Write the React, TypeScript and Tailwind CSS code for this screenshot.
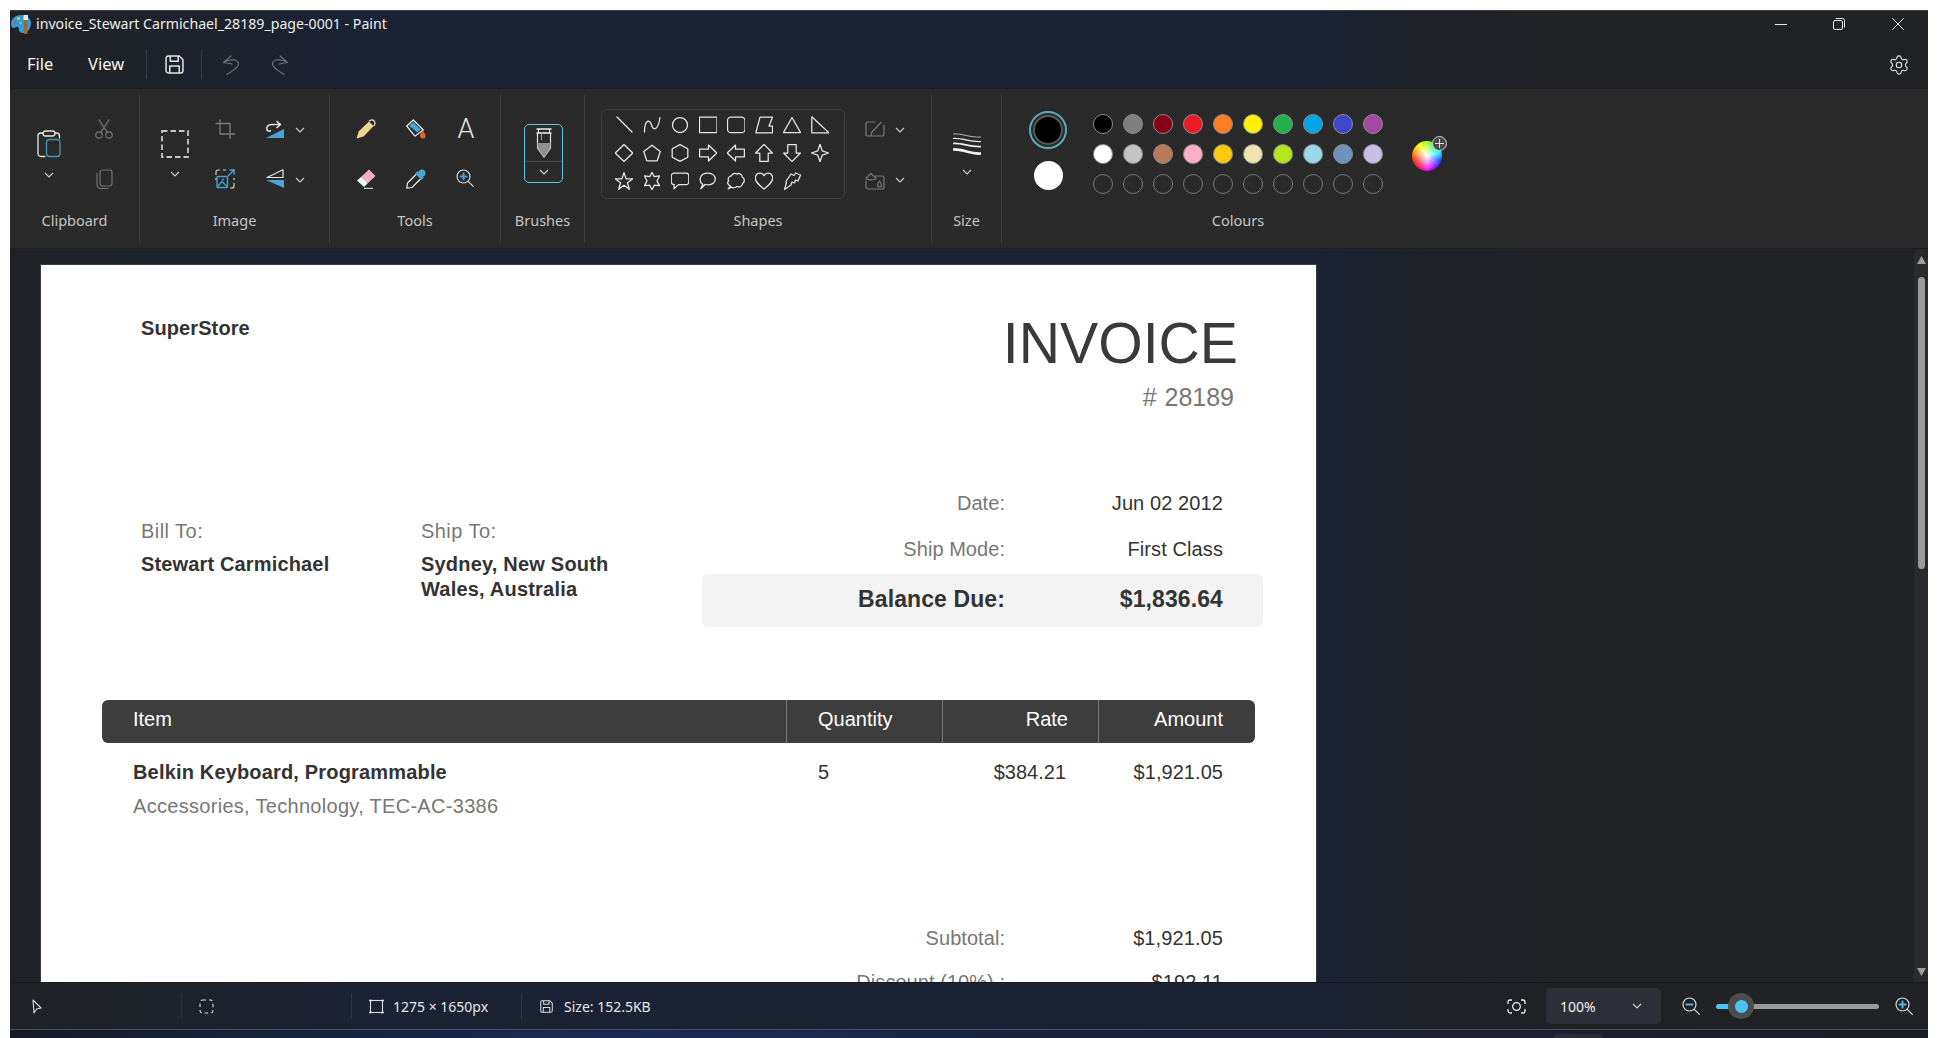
import React from "react";
import { Settings } from "lucide-react";

type SP = { w: number; h: number; children: React.ReactNode; s?: string; sw?: number };
const Ic = ({ w, h, children, s = "#e6e6e6", sw = 1.3 }: SP) => (
  <svg width={w} height={h} viewBox={`0 0 ${w} ${h}`} fill="none" stroke={s} strokeWidth={sw} strokeLinejoin="round" strokeLinecap="round" className="block shrink-0">
    {children}
  </svg>
);

const Chevron = ({ c = "#d0d0d0", w = 10 }: { c?: string; w?: number }) => (
  <svg width={w} height="6" viewBox="0 0 10 6" fill="none" stroke={c} strokeWidth="1.1" className="block shrink-0">
    <path d="M1 1 L5 5 L9 1" />
  </svg>
);

const Floppy = ({ size, c = "#e6e6e6" }: { size: number; c?: string }) => (
  <svg width={size} height={size} viewBox="0 0 18 18" fill="none" stroke={c} strokeWidth="1.4" strokeLinejoin="round" className="block shrink-0">
    <path d="M3 1 H13.5 L17 4.5 V15 a2 2 0 0 1 -2 2 H3 a2 2 0 0 1 -2 -2 V3 a2 2 0 0 1 2 -2 Z" />
    <path d="M5 1 V6 H12.5 V1" />
    <path d="M4.5 17 V10.5 H13.5 V17" />
  </svg>
);

const Magnifier = ({ plus, minus, blue = "#53b7e8" }: { plus?: boolean; minus?: boolean; blue?: string }) => (
  <Ic w={18} h={18} sw={1.2} s="#dcdcdc">
    <circle cx="7.5" cy="7.5" r="6.5" />
    <path d="M12.3 12.3 L17.3 17.3" />
    {(plus || minus) && <path d="M4.5 7.5 H10.5" stroke={blue} strokeWidth="2" />}
    {plus && <path d="M7.5 4.5 V10.5" stroke={blue} strokeWidth="2" />}
  </Ic>
);

const shapes: React.ReactNode[] = [
  <path d="M2 1 L17 16" />,
  <path d="M1.5 16 C1.5 3 7 3 8.5 9 C10 15 15 15 17 1.5" />,
  <circle cx="9" cy="9" r="7.5" />,
  <rect x="0.5" y="1.2" width="17.5" height="15.5" />,
  <rect x="0.5" y="1.2" width="17.5" height="15.5" rx="3.5" />,
  <path d="M5 1.2 H17.5 L14 10 H17.5 V16.8 H0.8 Z" />,
  <path d="M9 1.5 L17.5 16.5 H0.5 Z" />,
  <path d="M0.8 0.8 L18 16.8 H0.8 Z" />,
  <path d="M9 0.5 L17.8 9 L9 17.5 L0.2 9 Z" />,
  <path d="M9 1.2 L17.3 7.5 L14.2 16.8 H3.8 L0.7 7.5 Z" />,
  <path d="M9 0.6 L16.8 4.8 V13.2 L9 17.4 L1.2 13.2 V4.8 Z" />,
  <path d="M0.6 5.2 H9.5 V1 L17.8 9 L9.5 17 V12.8 H0.6 Z" />,
  <path d="M17.4 5.2 H8.5 V1 L0.2 9 L8.5 17 V12.8 H17.4 Z" />,
  <path d="M9 0.4 L17.4 9 H13.2 V17.4 H4.8 V9 H0.6 Z" />,
  <path d="M9 17.6 L17.4 9 H13.2 V0.6 H4.8 V9 H0.6 Z" />,
  <path d="M9 0.3 L11.2 6.8 L17.7 9 L11.2 11.2 L9 17.7 L6.8 11.2 L0.3 9 L6.8 6.8 Z" />,
  <path d="M9 0.6 L11.1 6.9 H17.8 L12.4 10.8 L14.4 17.3 L9 13.3 L3.6 17.3 L5.6 10.8 L0.2 6.9 H6.9 Z" />,
  <path d="M9 0.3 L11.2 4.6 L16.4 3.9 L14 8.9 L16.4 13.6 L11.3 13.2 L9 17.7 L6.7 13.2 L1.6 13.6 L4 8.9 L1.6 3.9 L6.8 4.6 Z" />,
  <path d="M3.2 1.2 H15.2 a2.6 2.6 0 0 1 2.6 2.6 V10 a2.6 2.6 0 0 1 -2.6 2.6 H7.5 L3 16.8 L3.3 12.6 a2.6 2.6 0 0 1 -3 -2.6 V3.8 a2.6 2.6 0 0 1 2.9 -2.6 Z" />,
  <path d="M3.8 12.5 C-0.5 9.5 0 1 9 1 C18.5 1 19 12.9 9 12.9 C8 12.9 7 12.8 6 12.5 L1.8 16.8 Z" />,
  <path d="M3.5 14 C0.3 13 0.2 10 1.6 9 C0.2 6.5 2.3 3.8 4.5 3.8 C5 1.8 8 0.5 10 2 C12.5 0.5 15.2 2.8 15.2 5 C17.9 6 17.9 10.2 15.7 11.2 C15.7 14.2 12 15.8 10 14.4 C8.5 16.1 5.5 16.1 4.5 15 L1.2 16.9 Z" />,
  <path d="M9 17 C4 13 0.3 10 0.3 5.9 C0.3 2.8 2.8 1 5 1 C7 1 8.2 2.2 9 3.6 C9.8 2.2 11 1 13 1 C15.2 1 17.7 2.8 17.7 5.9 C17.7 10 14 13 9 17 Z" />,
  <path d="M8 2 L11 3.5 L12.5 1 L17.5 3 L15 9 L12.5 8 L11.5 11 L9 10 L8 13 L1.5 17.5 L3.5 10.5 L2.8 9.5 Z" />,
];

const topColors = ["#000000", "#7f7f7f", "#880015", "#ed1c24", "#ff7f27", "#fff200", "#22b14c", "#00a2e8", "#3f48cc", "#a349a4"];
const midColors = ["#ffffff", "#c3c3c3", "#b97a57", "#ffaec9", "#ffc90e", "#efe4b0", "#b5e61d", "#99d9ea", "#7092be", "#c8bfe7"];
const emptyColors = Array.from({ length: 10 }, (_, i) => i);

const Group = ({ className, label, children }: { className: string; label: string; children: React.ReactNode }) => (
  <div className={`mt-[5px] h-[149px] flex flex-col shrink-0 ${className}`}>
    <div className="h-[116px] flex">{children}</div>
    <div className="h-[20px] leading-[20px] text-center text-[14.5px] text-[#c4c4c4]">{label}</div>
  </div>
);

const Row = ({ label, value, className = "" }: { label: string; value: string; className?: string }) => (
  <div className={`grid grid-cols-[303px_218px] ${className}`}>
    <div className="text-right text-[#777777] tracking-[0.05px]">{label}</div>
    <div className="text-right text-[#333333] tracking-[0.1px]">{value}</div>
  </div>
);

export default function App() {
  return (
    <div className="w-[1938px] h-[1038px] bg-white pt-[10px] px-[10px] flex flex-col overflow-hidden font-['Noto_Sans',sans-serif]">
      <div className="flex-1 min-h-0 flex flex-col border-t border-[#3e3e3e] bg-[linear-gradient(90deg,#202226_0px,#1f2228_80px,#1b2233_350px,#1a2233_1306px,#1e2129_1400px,#202225_1550px)]">
        {/* Title bar */}
        <div className="h-[33px] pb-[7px] flex items-center text-[#eeeeee] shrink-0">
          <div className="ml-[1px] w-[25px] shrink-0">
            <svg width="20" height="20" viewBox="0 0 20 20" className="block">
              <path d="M10 1 C4 1 0 5 0 10 C0 14 3 15 5 13 C7 12 8 14 8 16 C8 18 10 19 12 19 C17 19 20 14 20 9 C20 4 15 1 10 1 Z" fill="#2f9ce0" />
              <circle cx="4" cy="8" r="1.4" fill="#ef4444" />
              <circle cx="7.5" cy="4.5" r="1.4" fill="#facc15" />
              <circle cx="9.5" cy="9" r="1.4" fill="#4ade80" />
              <rect x="13" y="6" width="3.5" height="14" fill="#a5682a" />
              <rect x="12.5" y="1" width="4.5" height="5" fill="#e8e8e8" />
            </svg>
          </div>
          <span className="text-[14.15px] whitespace-nowrap">invoice_Stewart Carmichael_28189_page-0001 - Paint</span>
          <div className="ml-auto flex items-center pr-[24px]">
            <div className="w-[12px] h-px bg-[#e8e8e8]" />
            <div className="ml-[46px]">
              <Ic w={12} h={12} sw={1}>
                <rect x="0.5" y="2.5" width="9" height="9" rx="1.5" />
                <path d="M3 0.5 H9.5 a2 2 0 0 1 2 2 V9" />
              </Ic>
            </div>
            <div className="ml-[47px]">
              <Ic w={12} h={12} sw={1}>
                <path d="M0.5 0.5 L11.5 11.5 M11.5 0.5 L0.5 11.5" />
              </Ic>
            </div>
          </div>
        </div>
        {/* Menu */}
        <div className="h-[44px] pb-[3px] flex items-center text-[#f2f2f2] text-[16.5px] shrink-0">
          <span className="ml-[17px] w-[61px]">File</span>
          <span className="w-[58px]">View</span>
          <div className="w-px h-[29px] bg-[#3a3d43]" />
          <div className="ml-[18px]"><Floppy size={19} /></div>
          <div className="ml-[17px] w-px h-[29px] bg-[#3a3d43]" />
          <div className="ml-[20px]">
            <Ic w={18} h={20} s="#6f7074" sw={1.2}>
              <path d="M9 1 L1.5 7.5 L10 9 M1.5 7.5 C6 5 13 3 16 7 C18.5 11 12 15 5 19.5" />
            </Ic>
          </div>
          <div className="ml-[31px]">
            <Ic w={18} h={20} s="#6f7074" sw={1.2}>
              <path d="M9 1 L16.5 7.5 L8 9 M16.5 7.5 C12 5 5 3 2 7 C-0.5 11 6 15 13 19.5" />
            </Ic>
          </div>
          <div className="ml-auto mr-[18px]">
            <Settings size={22} strokeWidth={1.2} color="#e8e8e8" />
          </div>
        </div>
        {/* Ribbon */}
        <div className="h-[160px] bg-[#2a2a2a] border-t border-[#1e1e1e] flex shrink-0">
          <Group className="w-[130px] border-r border-[#3c3c3c]" label="Clipboard">
            <div className="ml-[27px] w-[24px] pt-[36px] flex flex-col items-center">
              <Ic w={24} h={28} sw={1.3}>
                <path d="M8 26.5 H4 a3 3 0 0 1 -3 -3 V6 a3 3 0 0 1 3 -3 H6 M18 3 H19.5 a3 3 0 0 1 3 3 V8" />
                <rect x="6" y="1" width="12" height="5" rx="2.5" />
                <rect x="9.5" y="9.5" width="13.5" height="17" rx="3" stroke="#4a93b5" />
              </Ic>
              <div className="mt-[14px]"><Chevron /></div>
            </div>
            <div className="ml-[33px] pt-[25px] flex flex-col gap-[30px]">
              <Ic w={20} h={20} s="#737373" sw={1.2}>
                <circle cx="5" cy="16" r="3.2" />
                <circle cx="15" cy="16" r="3.2" />
                <path d="M6.8 13.3 L15 0.8 M13.2 13.3 L5 0.8" />
              </Ic>
              <Ic w={20} h={20} s="#737373" sw={1.2}>
                <rect x="6" y="1" width="12" height="16" rx="2.5" />
                <path d="M3 4.5 V15.5 a4 4 0 0 0 4 4 H14" />
              </Ic>
            </div>
          </Group>
          <Group className="w-[190px] border-r border-[#3c3c3c]" label="Image">
            <div className="ml-[21px] w-[28px] pt-[36px] flex flex-col items-center">
              <svg width="28" height="28" viewBox="0 0 28 28" className="block">
                <rect x="1" y="1" width="26" height="26" fill="none" stroke="#c8c8c8" strokeWidth="1.8" strokeDasharray="5.5 3" />
              </svg>
              <div className="mt-[13px]"><Chevron /></div>
            </div>
            <div className="ml-[26px] pt-[25px] flex flex-col gap-[30px]">
              <Ic w={20} h={20} s="#7c7c7c" sw={1.3}>
                <path d="M5 1 V15 H20 M1 4.5 H15 V19" />
              </Ic>
              <svg width="20" height="20" viewBox="0 0 20 20" fill="none" className="block">
                <path d="M1 6 V3 a2 2 0 0 1 2 -2 H5 M8 1 H11 M1 9 V11 M19 9 V11 M19 14 V17 a2 2 0 0 1 -2 2 H15" stroke="#d0d0d0" strokeWidth="1.2" />
                <path d="M13 7 L19 1 M14.5 1 H19 V5.5" stroke="#4aa3d3" strokeWidth="1.4" />
                <rect x="2" y="7.5" width="10.5" height="11" rx="1" stroke="#4aa3d3" strokeWidth="1.4" />
                <path d="M2.5 17.5 L7 12.5 L12 17.5" stroke="#4aa3d3" strokeWidth="1.4" />
                <circle cx="8" cy="10.5" r="1" fill="#4aa3d3" />
              </svg>
            </div>
            <div className="ml-[31px] pt-[26px] flex flex-col gap-[31px]">
              <svg width="18" height="18" viewBox="0 0 18 18" fill="none" className="block">
                <path d="M0 18 H18 V9 Z" fill="#4aa3d3" />
                <path d="M1.5 11 C-0.5 7 2 4.5 6 4.5 H14 M10.5 1 L14.5 4.5 L10.5 8 M1.5 11 H5" stroke="#eeeeee" strokeWidth="1.4" strokeLinejoin="round" />
              </svg>
              <svg width="18" height="19" viewBox="0 0 18 19" fill="none" className="block">
                <path d="M1 8.5 H17 V0.8 Z" stroke="#e6e6e6" strokeWidth="1.2" strokeLinejoin="round" />
                <path d="M0 11 H18 V19 Z" fill="#4aa3d3" />
              </svg>
            </div>
            <div className="ml-[11px] pt-[33px] flex flex-col gap-[44px]">
              <Chevron />
              <Chevron />
            </div>
          </Group>
          <Group className="w-[171px] border-r border-[#3c3c3c]" label="Tools">
            <div className="ml-[26px] pt-[25px] grid grid-cols-[20px_20px_20px] gap-x-[30px] gap-y-[30px] h-max">
              <svg width="20" height="20" viewBox="0 0 20 20" fill="none" className="block">
                <path d="M0.6 19.4 L2.6 12.4 L13 2.4 L17.6 7 L7.6 17.4 Z" fill="#f1d48c" />
                <path d="M13 2.4 C14.5 0.8 16.5 0.4 18 1.8 C19.6 3.4 19 5.6 17.6 7" stroke="#eeeeee" strokeWidth="1.2" />
              </svg>
              <svg width="21" height="20" viewBox="0 0 21 20" fill="none" className="block">
                <path d="M0.7 7 L7.3 1 L17.3 11 L9.8 16.6 a1 1 0 0 1 -1.4 0 Z" stroke="#eeeeee" strokeWidth="1.2" strokeLinejoin="round" />
                <path d="M3 6.8 L7.3 3 L14.8 10.8 L11 13.6 Z" fill="#4aa3d3" />
                <path d="M16.7 11.5 C15 14 14 15 14 16.8 a2.8 2.8 0 0 0 5.6 0 C19.6 15 18.4 14 16.7 11.5 Z" fill="#e2602f" />
              </svg>
              <div className="h-[20px] w-[20px] flex items-center justify-center text-[27px] leading-[20px] text-[#e4e4e4] font-light font-['Roboto',sans-serif]">A</div>
              <svg width="20" height="20" viewBox="0 0 20 20" fill="none" className="block">
                <path d="M13 0.5 L19.5 7 L12 14 L5.5 7.5 Z" fill="#f4b0b4" />
                <path d="M5.5 7.5 L12 14 L8 18 L1 11.5 Z" fill="#f0f0f0" />
                <path d="M8 19.3 H17" stroke="#dddddd" strokeWidth="1.1" />
              </svg>
              <svg width="20" height="20" viewBox="0 0 20 20" fill="none" className="block">
                <path d="M10 5.5 L1.5 14 L0.8 19 L6 18.5 L14.5 10" stroke="#eeeeee" strokeWidth="1.2" />
                <circle cx="16" cy="4" r="3.5" fill="#4aa3d3" />
                <path d="M9 4.5 L15.5 11 L18 8.5 L11.5 2 Z" fill="#4aa3d3" />
              </svg>
              <Magnifier plus blue="#4aa3d3" />
            </div>
          </Group>
          <Group className="w-[84px] border-r border-[#3c3c3c]" label="Brushes">
            <div className="ml-[23px] mt-[30px] w-[39px] h-[59px] rounded-[5px] border border-[#62c3dd] flex flex-col items-center">
              <div className="h-[37px] w-full flex justify-center border-b border-[#4a4a4a] pt-[3px]">
                <svg width="16" height="30" viewBox="0 0 16 30" fill="none" className="block">
                  <path d="M0.5 1 H15.5 M0.5 5 H15.5" stroke="#eeeeee" strokeWidth="1.4" />
                  <path d="M2.5 1 V5 M13.5 1 V5" stroke="#eeeeee" strokeWidth="1" />
                  <path d="M1.5 5 V20 L8 29 L14.5 20 V5" stroke="#e0e0e0" strokeWidth="1.2" />
                  <path d="M1.5 15 H14.5 V20 L8 29 L1.5 20 Z" fill="#8f8f8f" />
                  <path d="M5.5 6 V12" stroke="#9a9a9a" strokeWidth="1.1" />
                </svg>
              </div>
              <div className="flex-1 flex items-center justify-center"><Chevron /></div>
            </div>
          </Group>
          <Group className="w-[347px] border-r border-[#3c3c3c]" label="Shapes">
            <div className="ml-[16px] mt-[15px] w-[244px] h-[90px] rounded-[6px] border border-[#3f3f3f] pl-[8px] pt-[1px] grid grid-cols-[repeat(8,28px)] auto-rows-[28px]">
              {shapes.map((s, i) => (
                <div key={i} className="flex items-center justify-center">
                  <Ic w={18} h={18} s="#e8e8e8" sw={1.25}>{s}</Ic>
                </div>
              ))}
            </div>
            <div className="ml-[20px] pt-[26px] flex flex-col gap-[30px]">
              <Ic w={20} h={20} s="#777777" sw={1.2}>
                <path d="M10 2 H3 a2 2 0 0 0 -2 2 V14 a2 2 0 0 0 2 2 H6 L7 12 L16 2.5 M19 5 V14 a2 2 0 0 1 -2 2 H7" />
              </Ic>
              <Ic w={20} h={20} s="#777777" sw={1.2}>
                <path d="M10 6 H17 a2 2 0 0 1 2 2 V17 a2 2 0 0 1 -2 2 H3 a2 2 0 0 1 -2 -2 V11" />
                <path d="M1 8 L6 3.5 L11 8 C11 10.5 1 10.5 1 8 Z" />
                <path d="M14.5 11 C13 13 12.5 14 12.5 15 a2 2 0 0 0 4 0 C16.5 14 16 13 14.5 11 Z" />
              </Ic>
            </div>
            <div className="ml-[10px] pt-[33px] flex flex-col gap-[44px]">
              <Chevron />
              <Chevron />
            </div>
          </Group>
          <Group className="w-[70px] border-r border-[#3c3c3c]" label="Size">
            <div className="w-full pt-[39px] flex flex-col items-center">
              <svg width="28" height="23" viewBox="0 0 28 23" fill="none" stroke="#f2f2f2" className="block">
                <path d="M0 1 C8 0 18 5 28 4" strokeWidth="0.7" />
                <path d="M0 5.5 C8 4.5 18 9.5 28 8.5" strokeWidth="1.1" />
                <path d="M0 10.5 C8 9.5 18 14.5 28 13.5" strokeWidth="1.7" />
                <path d="M0 16.5 C8 15.5 18 21.5 28 20.5" strokeWidth="2.6" />
              </svg>
              <div className="mt-[13px]"><Chevron /></div>
            </div>
          </Group>
          <Group className="w-[472px]" label="Colours">
            <div className="ml-[27px] w-[38px] pt-[17px] flex flex-col items-center">
              <div className="w-[38px] h-[38px] rounded-full border-2 border-[#5fa8ba] p-[2px]">
                <div className="w-full h-full rounded-full bg-black border-2 border-[#585858]" />
              </div>
              <div className="mt-[12px] w-[29px] h-[29px] rounded-full bg-white" />
            </div>
            <div className="ml-[26px] pt-[20px] grid grid-cols-[repeat(10,20px)] gap-[10px] h-max">
              {topColors.map((c) => (
                <div key={c} className="w-[20px] h-[20px] rounded-full border border-[#8a8a8a]" style={{ backgroundColor: c }} />
              ))}
              {midColors.map((c) => (
                <div key={c} className="w-[20px] h-[20px] rounded-full border border-[#8a8a8a]" style={{ backgroundColor: c }} />
              ))}
              {emptyColors.map((i) => (
                <div key={i} className="w-[20px] h-[20px] rounded-full border border-[#757575]" />
              ))}
            </div>
            <div className="ml-[29px] mt-[47px] relative w-[30px] h-[30px] rounded-full bg-[image:radial-gradient(circle,#ffffff_0%,#ffffff00_72%),conic-gradient(#a8ff00,#00ff80,#00ffff,#0040ff,#8000ff,#ff00ff,#ff0040,#ff2000,#ff9000,#ffff00,#a8ff00)]">
              <div className="absolute left-[20px] top-[-5px] w-[15px] h-[15px] rounded-full bg-[#4a4a4a] border border-[#d0d0d0] flex items-center justify-center">
                <svg width="9" height="9" viewBox="0 0 9 9" stroke="#e0e0e0" strokeWidth="1" className="block">
                  <path d="M0 4.5 H9 M4.5 0 V9" />
                </svg>
              </div>
            </div>
          </Group>
        </div>
        {/* Canvas */}
        <div className="flex-1 min-h-0 flex border-t border-[#1c1d20]">
          <div className="flex-1 min-w-0 overflow-hidden pl-[31px] pt-[16px]">
            <div className="w-[1275px] h-[1650px] bg-white outline outline-1 outline-[#3a3d44] font-['Liberation_Sans',sans-serif] text-[20px] leading-[24px] text-[#333333]">
              <div className="flex justify-between pt-[51px] pl-[100px] pr-[78px]">
                <div className="font-bold tracking-[0.1px]">SuperStore</div>
                <div className="flex flex-col items-end -mt-[3px]">
                  <div className="text-[57.2px] leading-[60px] text-[#3a3a3a]">INVOICE</div>
                  <div className="mt-[10px] mr-[4px] text-[25px] leading-[28px] text-[#777777]">
                    <span className="mr-[1px]">#</span> 28189
                  </div>
                </div>
              </div>
              <div className="flex mt-[69px]">
                <div className="ml-[100px] w-[280px] pt-[39px]">
                  <div className="text-[#777777] tracking-[0.45px]">Bill To:</div>
                  <div className="mt-[9px] font-bold leading-[25px] tracking-[0.15px]">Stewart Carmichael</div>
                </div>
                <div className="w-[281px] pt-[39px]">
                  <div className="text-[#777777] tracking-[0.45px]">Ship To:</div>
                  <div className="mt-[9px] font-bold leading-[25px] tracking-[0.2px]">Sydney, New South<br />Wales, Australia</div>
                </div>
                <div className="w-[561px]">
                  <Row label="Date:" value="Jun 02 2012" className="pt-[11px] h-[46px]" />
                  <Row label="Ship Mode:" value="First Class" className="pt-[11px] h-[48px]" />
                  <div className="h-[53px] rounded-[6px] bg-[#f3f3f3] pt-[12px] grid grid-cols-[303px_218px] text-[23px] leading-[26px] font-bold tracking-[0.1px]">
                    <div className="text-right">Balance Due:</div>
                    <div className="text-right">$1,836.64</div>
                  </div>
                </div>
              </div>
              <div className="ml-[61px] w-[1153px] mt-[73px] h-[43px] rounded-[6px] bg-[#3d3d3d] text-white grid grid-cols-[684px_156px_156px_157px] leading-[38px]">
                <div className="pl-[31px]">Item</div>
                <div className="pl-[31px] border-l border-[#777777]">Quantity</div>
                <div className="pr-[30px] text-right border-l border-[#777777]">Rate</div>
                <div className="pr-[32px] text-right border-l border-[#777777]">Amount</div>
              </div>
              <div className="ml-[61px] w-[1153px] mt-[17px] grid grid-cols-[684px_156px_156px_157px]">
                <div className="pl-[31px]">
                  <div className="font-bold tracking-[0.17px]">Belkin Keyboard, Programmable</div>
                  <div className="mt-[10px] text-[#777777] tracking-[0.3px]">Accessories, Technology, TEC-AC-3386</div>
                </div>
                <div className="pl-[32px]">5</div>
                <div className="pr-[32px] text-right">$384.21</div>
                <div className="pr-[32px] text-right tracking-[0.05px]">$1,921.05</div>
              </div>
              <div className="ml-[661px] mt-[108px] flex flex-col gap-[20px]">
                <Row label="Subtotal:" value="$1,921.05" />
                <Row label="Discount (10%) :" value="$192.11" />
              </div>
            </div>
          </div>
          <div className="w-[14px] shrink-0 bg-[#2a2b2e] rounded-t-[6px] flex flex-col items-center pl-[1px]">
            <svg width="9" height="8" viewBox="0 0 9 8" fill="#a0a0a0" className="block mt-[7px]"><path d="M4.5 0 L9 8 H0 Z" /></svg>
            <div className="mt-[13px] w-[7px] h-[292px] rounded-full bg-[#9a9a9a]" />
            <svg width="9" height="8" viewBox="0 0 9 8" fill="#a0a0a0" className="block mt-auto mb-[6px]"><path d="M4.5 8 L9 0 H0 Z" /></svg>
          </div>
        </div>
        {/* Status bar */}
        <div className="h-[47px] shrink-0 flex items-center text-[14px] text-[#e8e8e8] border-t border-[#17181b]">
          <div className="w-[172px] h-[26px] border-r border-[#2f343d] pl-[22px] flex items-center">
            <svg width="10" height="15" viewBox="0 0 10 15" fill="none" stroke="#dddddd" strokeWidth="1.1" strokeLinejoin="round" className="block">
              <path d="M1 1 L9 9 L4.5 10 L2 14 Z" />
            </svg>
          </div>
          <div className="w-[170px] h-[26px] border-r border-[#2f343d] pl-[17px] flex items-center">
            <svg width="15" height="15" viewBox="0 0 15 15" fill="none" stroke="#dddddd" strokeWidth="1.1" className="block">
              <rect x="1" y="1" width="13" height="13" rx="2.5" strokeDasharray="3.5 3" />
            </svg>
          </div>
          <div className="w-[170px] h-[26px] border-r border-[#2f343d] pl-[17px] flex items-center">
            <svg width="15" height="15" viewBox="0 0 15 15" fill="none" stroke="#dddddd" strokeWidth="1.1" className="block">
              <rect x="1.5" y="1.5" width="12" height="12" />
              <path d="M0 1.5 H3 M12 1.5 H15 M0 13.5 H3 M12 13.5 H15" strokeWidth="1.6" />
            </svg>
            <span className="ml-[9px] whitespace-nowrap">1275 × 1650px</span>
          </div>
          <div className="pl-[18px] flex items-center">
            <Floppy size={13} c="#dddddd" />
            <span className="ml-[11px] whitespace-nowrap">Size: 152.5KB</span>
          </div>
          <div className="ml-auto flex items-center pr-[15px]">
            <svg width="19" height="15" viewBox="0 0 19 15" fill="none" stroke="#eeeeee" strokeWidth="1.3" className="block">
              <path d="M1 5 V3 a2 2 0 0 1 2 -2 H5 M14 1 H16 a2 2 0 0 1 2 2 V5 M18 10 V12 a2 2 0 0 1 -2 2 H14 M5 14 H3 a2 2 0 0 1 -2 -2 V10" />
              <circle cx="9.5" cy="7.5" r="3.8" />
            </svg>
            <div className="ml-[20px] w-[115px] h-[36px] rounded-[5px] bg-[#2d3038] flex items-center pl-[14px] text-[#f2f2f2]">
              <span>100%</span>
              <div className="ml-[36px]"><Chevron /></div>
            </div>
            <div className="ml-[21px]"><Magnifier minus /></div>
            <div className="ml-[16px] w-[163px] flex items-center">
              <div className="w-[14px] h-[5px] rounded-l-full bg-[#4cc2ff]" />
              <div className="-mx-[2px] w-[26px] h-[26px] rounded-full bg-[#4d4d4d] flex items-center justify-center relative">
                <div className="w-[13px] h-[13px] rounded-full bg-[#4cc2ff]" />
              </div>
              <div className="flex-1 h-[5px] rounded-r-full bg-[#9a9a9a]" />
            </div>
            <div className="ml-[16px]"><Magnifier plus /></div>
          </div>
        </div>
      </div>
      {/* Desktop strip */}
      <div className="h-[9px] shrink-0 border-t border-[#4a4f58] bg-[linear-gradient(90deg,#151a26_0px,#17233f_300px,#1c2a58_650px,#1a2340_1000px,#1c2030_1500px,#1a1c24_1928px)] flex">
        <div className="ml-[1543px] mt-[4px] w-[50px] rounded-t-[5px] bg-[#2a2d36]" />
      </div>
    </div>
  );
}
